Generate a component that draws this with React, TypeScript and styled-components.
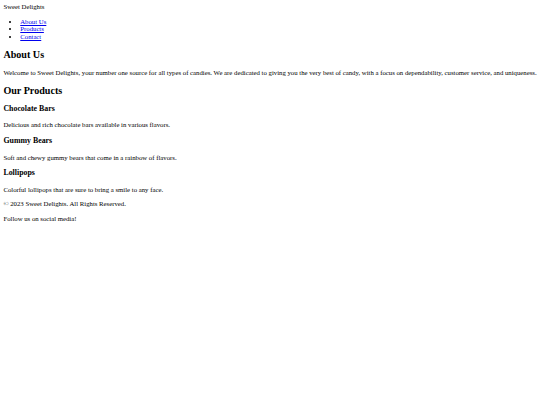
import React from 'react';
import styled, { createGlobalStyle } from 'styled-components';

// the page is a plain unstyled document shown at 540/1280 of its size
const S = 0.421875;
const px = (n: number) => `${n * S}px`;

const GlobalStyle = createGlobalStyle`
    html, body {
        background: #ffffff;
    }
    body {
        margin: ${px(8)};
        font-family: 'Liberation Serif', 'Times New Roman', serif;
        font-size: ${px(16)};
        line-height: 1.13;
        color: #000000;
    }
`;

const Header = styled.header``;

const Logo = styled.div``;

const NavList = styled.ul`
    margin: 1em 0;
    padding-left: ${px(40)};
    list-style: disc;
`;

const NavLink = styled.a`
    color: #0000ee;
    text-decoration: underline;
`;

const Section = styled.section``;

const SectionTitle = styled.h2`
    font-size: 1.5em;
    font-weight: bold;
    margin: 0.83em 0;
`;

const Text = styled.p`
    margin: 1em 0;
`;

const Product = styled.div``;

const ProductTitle = styled.h3`
    font-size: 1.17em;
    font-weight: bold;
    margin: 1em 0;
`;

const Footer = styled.footer``;

const products = [
    {
        name: 'Chocolate Bars',
        text: 'Delicious and rich chocolate bars available in various flavors.',
    },
    {
        name: 'Gummy Bears',
        text: 'Soft and chewy gummy bears that come in a rainbow of flavors.',
    },
    {
        name: 'Lollipops',
        text: 'Colorful lollipops that are sure to bring a smile to any face.',
    },
];

const App = () => (
    <>
        <GlobalStyle />
        <Header>
            <Logo>Sweet Delights</Logo>
            <nav>
                <NavList>
                    <li>
                        <NavLink href="#about">About Us</NavLink>
                    </li>
                    <li>
                        <NavLink href="#products">Products</NavLink>
                    </li>
                    <li>
                        <NavLink href="#contact">Contact</NavLink>
                    </li>
                </NavList>
            </nav>
        </Header>
        <Section id="about">
            <SectionTitle>About Us</SectionTitle>
            <Text>
                Welcome to Sweet Delights, your number one source for all types of
                candies. We are dedicated to giving you the very best of candy, with
                a focus on dependability, customer service, and uniqueness.
            </Text>
        </Section>
        <Section id="products">
            <SectionTitle>Our Products</SectionTitle>
            {products.map(p => (
                <Product key={p.name}>
                    <ProductTitle>{p.name}</ProductTitle>
                    <Text>{p.text}</Text>
                </Product>
            ))}
        </Section>
        <Footer id="contact">
            <Text>© 2023 Sweet Delights. All Rights Reserved.</Text>
            <Text>Follow us on social media!</Text>
        </Footer>
    </>
);

export default App;
